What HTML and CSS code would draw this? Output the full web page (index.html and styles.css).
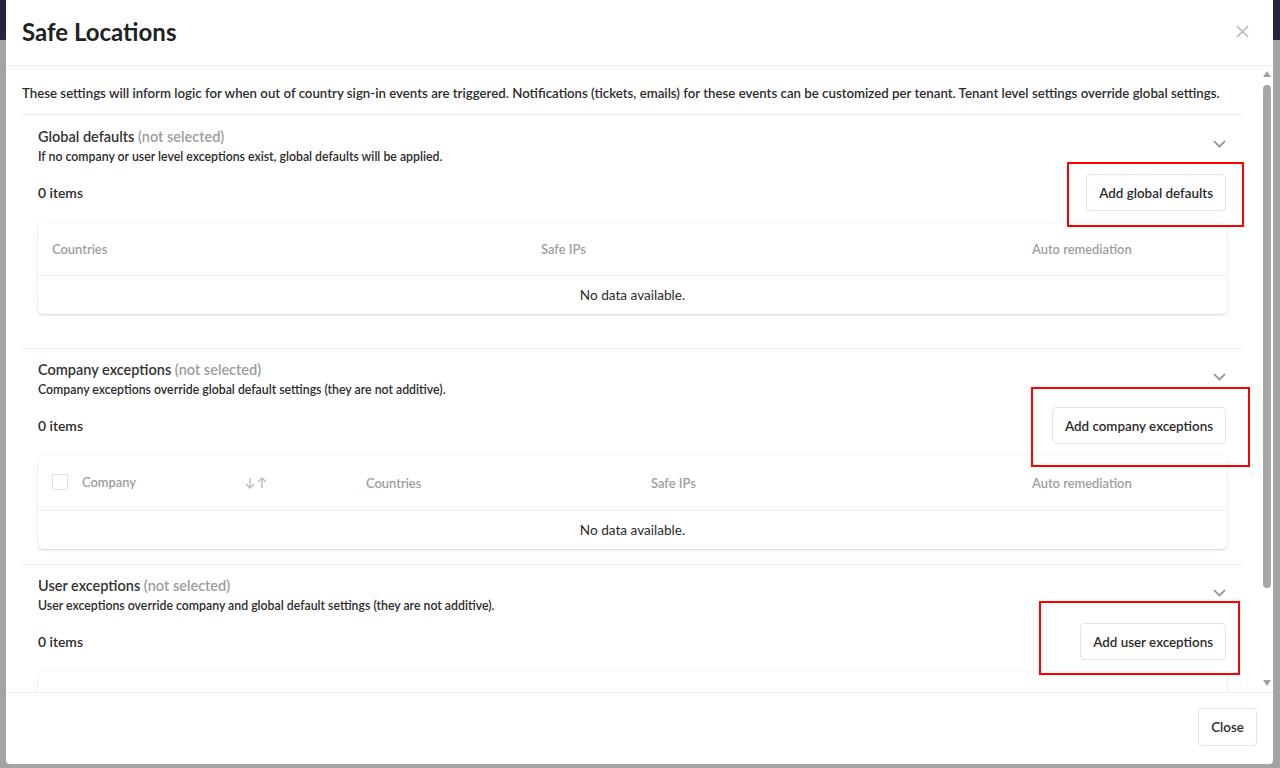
FILE: index.html
```html
<!DOCTYPE html>
<html lang="en">
<head>
  <meta charset="UTF-8" />
  <title>Safe Locations</title>
  <link rel="stylesheet" href="styles.css">
</head>
<body>
  <div class="backdrop">
    <div class="modal">
      <!-- Header -->
      <div class="modal-header">
        <h2>Safe Locations</h2>
        <button class="icon-close" aria-label="Close">
          <svg width="13" height="13" viewBox="0 0 13 13"><path d="M1 1L12 12M12 1L1 12" stroke="#b4b4b4" stroke-width="1.5" fill="none"/></svg>
        </button>
      </div>

      <div class="modal-main">
        <div class="modal-body">
          <p class="intro">These settings will inform logic for when out of country sign-in events are triggered. Notifications (tickets, emails) for these events can be customized per tenant. Tenant level settings override global settings.</p>

          <!-- Global defaults -->
          <section class="panel panel-first">
            <div class="panel-head">
              <div>
                <h3>Global defaults <span class="muted">(not selected)</span></h3>
                <p class="hint">If no company or user level exceptions exist, global defaults will be applied.</p>
              </div>
              <svg class="chevron" width="13" height="8" viewBox="0 0 13 8"><path d="M1 1L6.5 6.5L12 1" stroke="#8a8a8a" stroke-width="1.6" fill="none"/></svg>
            </div>
            <div class="panel-bar">
              <span class="count">0 items</span>
              <div class="action">
                <button class="btn">Add global defaults</button>
                <span class="mark mark-global"></span>
              </div>
            </div>
            <div class="table-card">
              <div class="row row-head cols-global">
                <div class="cell">Countries</div>
                <div class="cell">Safe IPs</div>
                <div class="cell">Auto remediation</div>
              </div>
              <div class="row-empty">No data available.</div>
            </div>
          </section>

          <!-- Company exceptions -->
          <section class="panel">
            <div class="panel-head">
              <div>
                <h3>Company exceptions <span class="muted">(not selected)</span></h3>
                <p class="hint">Company exceptions override global default settings (they are not additive).</p>
              </div>
              <svg class="chevron" width="13" height="8" viewBox="0 0 13 8"><path d="M1 1L6.5 6.5L12 1" stroke="#8a8a8a" stroke-width="1.6" fill="none"/></svg>
            </div>
            <div class="panel-bar">
              <span class="count">0 items</span>
              <div class="action">
                <button class="btn">Add company exceptions</button>
                <span class="mark mark-company"></span>
              </div>
            </div>
            <div class="table-card">
              <div class="row row-head cols-company">
                <div class="cell"><span class="checkbox"></span></div>
                <div class="cell cell-sort">
                  <span class="company-label">Company</span>
                  <svg class="sort" width="24" height="12" viewBox="0 0 24 12"><path d="M6 1V11M2 7L6 11L10 7M18 11V1M14 5L18 1L22 5" stroke="#bdbdbd" stroke-width="1.5" fill="none"/></svg>
                </div>
                <div class="cell">Countries</div>
                <div class="cell">Safe IPs</div>
                <div class="cell">Auto remediation</div>
              </div>
              <div class="row-empty">No data available.</div>
            </div>
          </section>

          <!-- User exceptions (table scrolled below the fold) -->
          <section class="panel">
            <div class="panel-head">
              <div>
                <h3>User exceptions <span class="muted">(not selected)</span></h3>
                <p class="hint">User exceptions override company and global default settings (they are not additive).</p>
              </div>
              <svg class="chevron" width="13" height="8" viewBox="0 0 13 8"><path d="M1 1L6.5 6.5L12 1" stroke="#8a8a8a" stroke-width="1.6" fill="none"/></svg>
            </div>
            <div class="panel-bar">
              <span class="count">0 items</span>
              <div class="action">
                <button class="btn">Add user exceptions</button>
                <span class="mark mark-user"></span>
              </div>
            </div>
            <div class="table-card table-placeholder"></div>
          </section>
        </div>

        <!-- Scrollbar -->
        <div class="scrollbar">
          <svg width="8" height="6" viewBox="0 0 8 6"><path d="M4 0L8 6H0z" fill="#a0a0a0"/></svg>
          <div class="scroll-thumb"></div>
          <svg class="scroll-down" width="8" height="6" viewBox="0 0 8 6"><path d="M0 0H8L4 6z" fill="#a0a0a0"/></svg>
        </div>
      </div>

      <!-- Footer -->
      <div class="modal-footer">
        <button class="btn btn-close">Close</button>
      </div>
    </div>
  </div>
</body>
</html>
```

FILE: styles.css
```css
body {
  margin: 0;
  font-family: Lato, "Noto Sans", sans-serif;
  color: #2b2b2b;
  background-color: #a4a4a4;
  overflow: hidden;
}

.backdrop {
  height: 768px;
  box-sizing: border-box;
  padding: 0 7px 4px 6px;
  background: linear-gradient(#26243f 0, #26243f 40px, #a4a4a4 40px);
}

.modal {
  height: 764px;
  background-color: #fff;
  border-radius: 0 0 4px 4px;
  display: flex;
  flex-direction: column;
}

.modal-header {
  flex: none;
  height: 66px;
  box-sizing: border-box;
  padding: 0 24px 3px 16px;
  border-bottom: 1px solid #ececf4;
  display: flex;
  align-items: center;
  justify-content: space-between;
}

.modal-header h2 {
  margin: 0;
  font-size: 24px;
  font-weight: 700;
  color: #222;
}

.icon-close {
  border: none;
  background: none;
  padding: 0;
  display: flex;
  cursor: pointer;
}

.modal-main {
  flex: 1;
  min-height: 0;
  display: flex;
}

.modal-body {
  flex: 1;
  overflow: hidden;
  padding: 0 18px 0 16px;
}

.scrollbar {
  flex: none;
  width: 12px;
  padding: 5px 0 6px;
  box-sizing: border-box;
  display: flex;
  flex-direction: column;
  align-items: center;
}

.scroll-thumb {
  width: 8px;
  height: 503px;
  margin-top: 8px;
  border-radius: 4px;
  background-color: #a6a6a6;
}

.scroll-down {
  margin-top: auto;
}

.intro {
  margin: 0;
  padding: 19px 0 13px;
  font-size: 13.25px;
  line-height: 16px;
  font-weight: 600;
  white-space: nowrap;
  border-bottom: 1px solid #ececf4;
}

.panel {
  padding: 12px 16px 15px;
  border-bottom: 1px solid #ececf4;
}

.panel-first {
  padding-top: 13px;
  padding-bottom: 34px;
}

.panel-head {
  display: flex;
  justify-content: space-between;
  align-items: flex-start;
}

.panel-head h3 {
  margin: 0;
  font-size: 14.5px;
  line-height: 18px;
  font-weight: 600;
  color: #333;
}

.muted {
  color: #9c9c9c;
}

.hint {
  margin: 4px 0 0;
  font-size: 12.3px;
  line-height: 14px;
  font-weight: 600;
  color: #2b2b2b;
}

.chevron {
  margin-top: 12px;
  margin-right: 1px;
}

.panel-bar {
  margin-top: 10px;
  display: flex;
  justify-content: space-between;
  align-items: center;
}

.count {
  font-size: 13.9px;
  font-weight: 600;
}

.action {
  position: relative;
  margin-right: 1px;
}

.btn {
  height: 37px;
  padding: 0 12px;
  border: 1px solid #e3e3ec;
  border-radius: 4px;
  background-color: #fff;
  font-family: inherit;
  font-size: 13.4px;
  font-weight: 600;
  color: #2b2b2b;
  cursor: pointer;
}

.mark {
  position: absolute;
  border: 2px solid #ff0000;
  pointer-events: none;
}

.mark-global {
  left: -19px;
  right: -18px;
  top: -12px;
  bottom: -16px;
}

.mark-company {
  left: -21px;
  right: -24px;
  top: -20px;
  bottom: -23px;
}

.mark-user {
  left: -41px;
  right: -14px;
  top: -22px;
  bottom: -15px;
}

.table-card {
  margin-top: 12px;
  border-radius: 5px;
  background-color: #fff;
  box-shadow: 0 1px 2px rgba(0, 0, 0, 0.16), 0 0 8px rgba(0, 0, 0, 0.04);
}

.table-placeholder {
  height: 92px;
}

.row {
  display: grid;
  align-items: center;
}

.row-head {
  height: 52px;
  border-bottom: 1px solid #f0f0f4;
  font-size: 12.9px;
  font-weight: 600;
  color: #9e9e9e;
}

.cols-global {
  grid-template-columns: 489px 491px 1fr;
}

.cols-company {
  grid-template-columns: 30px 284px 285px 381px 1fr;
  height: 54px;
}

.cell {
  padding-left: 14px;
  display: flex;
  align-items: center;
}

.cell-sort {
  justify-content: space-between;
  padding-right: 84px;
}

.company-label {
  margin-top: -3px;
}

.checkbox {
  width: 14px;
  height: 14px;
  border: 1px solid #e0e0e8;
  border-radius: 2px;
  margin-top: -2px;
}

.row-empty {
  height: 38px;
  display: flex;
  align-items: center;
  justify-content: center;
  font-size: 13.6px;
  color: #2b2b2b;
}

.modal-footer {
  flex: none;
  height: 72px;
  box-sizing: border-box;
  border-top: 1px solid #ececf4;
  padding: 15px 16px 0 0;
  display: flex;
  justify-content: flex-end;
  align-items: flex-start;
}

.btn-close {
  height: 38px;
  width: 59px;
  padding: 0;
}
```
